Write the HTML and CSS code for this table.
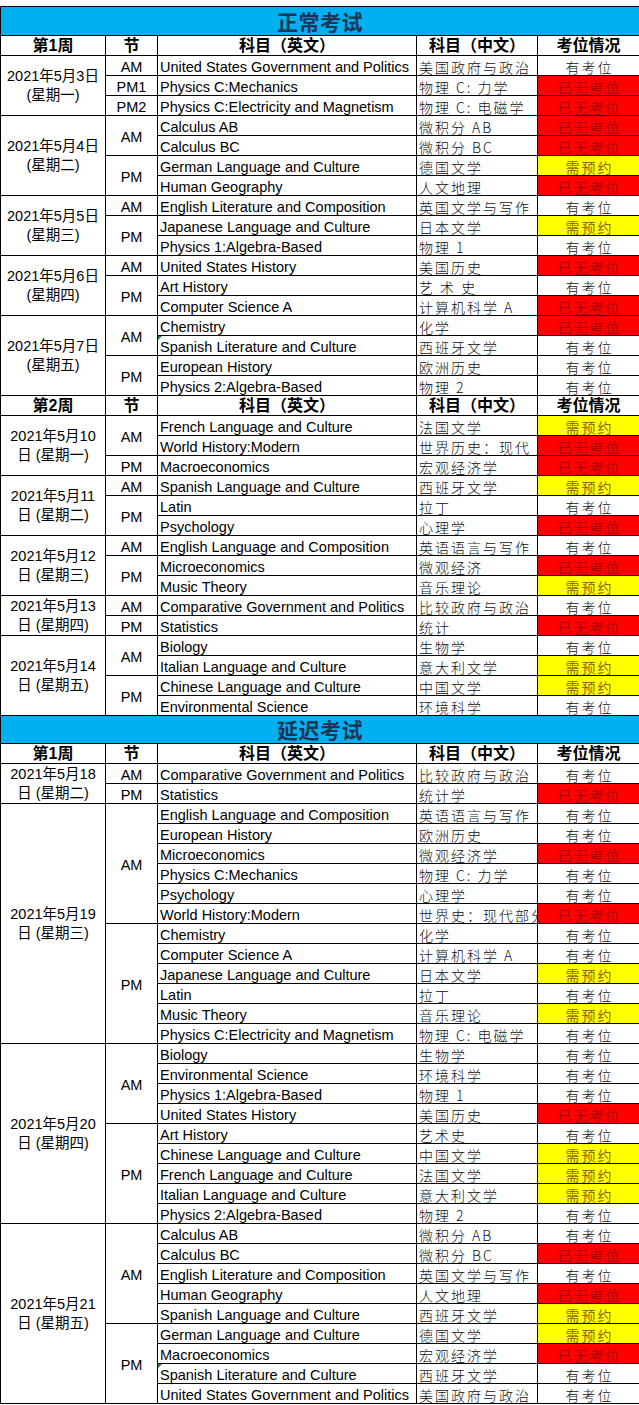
FILE: index.html
```html
<!DOCTYPE html>
<html lang="zh-CN">
<head>
<meta charset="utf-8">
<title>AP考试考位情况</title>
<link rel="stylesheet" href="styles.css">
</head>
<body>
<table class="sheet">
<colgroup><col class="c1"><col class="c2"><col class="c3"><col class="c4"><col class="c5"></colgroup>
<tbody>
<tr class="title first"><td colspan="5">正常考试</td></tr>
<tr class="hd"><td>第1周</td><td>节</td><td>科目（英文）</td><td>科目（中文）</td><td>考位情况</td></tr>

<tr><td class="date" rowspan="3">2021年5月3日<br>(星期一)</td><td class="sess">AM</td><td class="en">United States Government and Politics</td><td class="cn">美国政府与政治</td><td class="st ok">有考位</td></tr>
<tr><td class="sess">PM1</td><td class="en">Physics C:Mechanics</td><td class="cn">物理 C: 力学</td><td class="st full">已无考位</td></tr>
<tr><td class="sess">PM2</td><td class="en">Physics C:Electricity and Magnetism</td><td class="cn">物理 C: 电磁学</td><td class="st full">已无考位</td></tr>

<tr><td class="date" rowspan="4">2021年5月4日<br>(星期二)</td><td class="sess" rowspan="2">AM</td><td class="en">Calculus AB</td><td class="cn">微积分 AB</td><td class="st full">已无考位</td></tr>
<tr><td class="en">Calculus BC</td><td class="cn">微积分 BC</td><td class="st full">已无考位</td></tr>
<tr><td class="sess" rowspan="2">PM</td><td class="en">German Language and Culture</td><td class="cn">德国文学</td><td class="st book">需预约</td></tr>
<tr><td class="en">Human Geography</td><td class="cn">人文地理</td><td class="st full">已无考位</td></tr>

<tr><td class="date" rowspan="3">2021年5月5日<br>(星期三)</td><td class="sess">AM</td><td class="en">English Literature and Composition</td><td class="cn">英国文学与写作</td><td class="st ok">有考位</td></tr>
<tr><td class="sess" rowspan="2">PM</td><td class="en">Japanese Language and Culture</td><td class="cn">日本文学</td><td class="st book">需预约</td></tr>
<tr><td class="en">Physics 1:Algebra-Based</td><td class="cn">物理 1</td><td class="st ok">有考位</td></tr>

<tr><td class="date" rowspan="3">2021年5月6日<br>(星期四)</td><td class="sess">AM</td><td class="en">United States History</td><td class="cn">美国历史</td><td class="st full">已无考位</td></tr>
<tr><td class="sess" rowspan="2">PM</td><td class="en">Art History</td><td class="cn">艺 术 史</td><td class="st ok">有考位</td></tr>
<tr><td class="en">Computer Science A</td><td class="cn">计算机科学 A</td><td class="st full">已无考位</td></tr>

<tr><td class="date" rowspan="4">2021年5月7日<br>(星期五)</td><td class="sess" rowspan="2">AM</td><td class="en">Chemistry</td><td class="cn">化学</td><td class="st full">已无考位</td></tr>
<tr><td class="en mark">Spanish Literature and Culture</td><td class="cn">西班牙文学</td><td class="st ok">有考位</td></tr>
<tr><td class="sess" rowspan="2">PM</td><td class="en">European History</td><td class="cn">欧洲历史</td><td class="st ok">有考位</td></tr>
<tr><td class="en">Physics 2:Algebra-Based</td><td class="cn">物理 2</td><td class="st ok">有考位</td></tr>

<tr class="hd"><td>第2周</td><td>节</td><td>科目（英文）</td><td>科目（中文）</td><td>考位情况</td></tr>

<tr><td class="date" rowspan="3">2021年5月10<br>日 (星期一)</td><td class="sess" rowspan="2">AM</td><td class="en">French Language and Culture</td><td class="cn">法国文学</td><td class="st book">需预约</td></tr>
<tr><td class="en">World History:Modern</td><td class="cn">世界历史：现代</td><td class="st full">已无考位</td></tr>
<tr><td class="sess">PM</td><td class="en">Macroeconomics</td><td class="cn">宏观经济学</td><td class="st full">已无考位</td></tr>

<tr><td class="date" rowspan="3">2021年5月11<br>日 (星期二)</td><td class="sess">AM</td><td class="en">Spanish Language and Culture</td><td class="cn">西班牙文学</td><td class="st book">需预约</td></tr>
<tr><td class="sess" rowspan="2">PM</td><td class="en">Latin</td><td class="cn">拉丁</td><td class="st ok">有考位</td></tr>
<tr><td class="en">Psychology</td><td class="cn">心理学</td><td class="st full">已无考位</td></tr>

<tr><td class="date" rowspan="3">2021年5月12<br>日 (星期三)</td><td class="sess">AM</td><td class="en">English Language and Composition</td><td class="cn">英语语言与写作</td><td class="st ok">有考位</td></tr>
<tr><td class="sess" rowspan="2">PM</td><td class="en">Microeconomics</td><td class="cn">微观经济</td><td class="st full">已无考位</td></tr>
<tr><td class="en">Music Theory</td><td class="cn">音乐理论</td><td class="st book">需预约</td></tr>

<tr><td class="date" rowspan="2">2021年5月13<br>日 (星期四)</td><td class="sess">AM</td><td class="en">Comparative Government and Politics</td><td class="cn">比较政府与政治</td><td class="st ok">有考位</td></tr>
<tr><td class="sess">PM</td><td class="en">Statistics</td><td class="cn">统计</td><td class="st full">已无考位</td></tr>

<tr><td class="date" rowspan="4">2021年5月14<br>日 (星期五)</td><td class="sess" rowspan="2">AM</td><td class="en">Biology</td><td class="cn">生物学</td><td class="st ok">有考位</td></tr>
<tr><td class="en">Italian Language and Culture</td><td class="cn">意大利文学</td><td class="st book">需预约</td></tr>
<tr><td class="sess" rowspan="2">PM</td><td class="en">Chinese Language and Culture</td><td class="cn">中国文学</td><td class="st book">需预约</td></tr>
<tr><td class="en">Environmental Science</td><td class="cn">环境科学</td><td class="st ok">有考位</td></tr>

<tr class="title"><td colspan="5">延迟考试</td></tr>
<tr class="hd"><td>第1周</td><td>节</td><td>科目（英文）</td><td>科目（中文）</td><td>考位情况</td></tr>

<tr><td class="date" rowspan="2">2021年5月18<br>日 (星期二)</td><td class="sess">AM</td><td class="en">Comparative Government and Politics</td><td class="cn">比较政府与政治</td><td class="st ok">有考位</td></tr>
<tr><td class="sess">PM</td><td class="en">Statistics</td><td class="cn">统计学</td><td class="st full">已无考位</td></tr>

<tr><td class="date" rowspan="12">2021年5月19<br>日 (星期三)</td><td class="sess" rowspan="6">AM</td><td class="en">English Language and Composition</td><td class="cn">英语语言与写作</td><td class="st ok">有考位</td></tr>
<tr><td class="en">European History</td><td class="cn">欧洲历史</td><td class="st ok">有考位</td></tr>
<tr><td class="en">Microeconomics</td><td class="cn">微观经济学</td><td class="st full">已无考位</td></tr>
<tr><td class="en">Physics C:Mechanics</td><td class="cn">物理 C: 力学</td><td class="st ok">有考位</td></tr>
<tr><td class="en">Psychology</td><td class="cn">心理学</td><td class="st ok">有考位</td></tr>
<tr><td class="en">World History:Modern</td><td class="cn">世界史：现代部分</td><td class="st full">已无考位</td></tr>
<tr><td class="sess" rowspan="6">PM</td><td class="en">Chemistry</td><td class="cn">化学</td><td class="st ok">有考位</td></tr>
<tr><td class="en">Computer Science A</td><td class="cn">计算机科学 A</td><td class="st ok">有考位</td></tr>
<tr><td class="en">Japanese Language and Culture</td><td class="cn">日本文学</td><td class="st book">需预约</td></tr>
<tr><td class="en">Latin</td><td class="cn">拉丁</td><td class="st ok">有考位</td></tr>
<tr><td class="en">Music Theory</td><td class="cn">音乐理论</td><td class="st book">需预约</td></tr>
<tr><td class="en">Physics C:Electricity and Magnetism</td><td class="cn">物理 C: 电磁学</td><td class="st ok">有考位</td></tr>

<tr><td class="date" rowspan="9">2021年5月20<br>日 (星期四)</td><td class="sess" rowspan="4">AM</td><td class="en">Biology</td><td class="cn">生物学</td><td class="st ok">有考位</td></tr>
<tr><td class="en">Environmental Science</td><td class="cn">环境科学</td><td class="st ok">有考位</td></tr>
<tr><td class="en">Physics 1:Algebra-Based</td><td class="cn">物理 1</td><td class="st ok">有考位</td></tr>
<tr><td class="en">United States History</td><td class="cn">美国历史</td><td class="st full">已无考位</td></tr>
<tr><td class="sess" rowspan="5">PM</td><td class="en">Art History</td><td class="cn">艺术史</td><td class="st ok">有考位</td></tr>
<tr><td class="en">Chinese Language and Culture</td><td class="cn">中国文学</td><td class="st book">需预约</td></tr>
<tr><td class="en">French Language and Culture</td><td class="cn">法国文学</td><td class="st book">需预约</td></tr>
<tr><td class="en">Italian Language and Culture</td><td class="cn">意大利文学</td><td class="st book">需预约</td></tr>
<tr><td class="en">Physics 2:Algebra-Based</td><td class="cn">物理 2</td><td class="st ok">有考位</td></tr>

<tr><td class="date" rowspan="9">2021年5月21<br>日 (星期五)</td><td class="sess" rowspan="5">AM</td><td class="en">Calculus AB</td><td class="cn">微积分 AB</td><td class="st ok">有考位</td></tr>
<tr><td class="en">Calculus BC</td><td class="cn">微积分 BC</td><td class="st full">已无考位</td></tr>
<tr><td class="en">English Literature and Composition</td><td class="cn">英国文学与写作</td><td class="st ok">有考位</td></tr>
<tr><td class="en">Human Geography</td><td class="cn">人文地理</td><td class="st full">已无考位</td></tr>
<tr><td class="en">Spanish Language and Culture</td><td class="cn">西班牙文学</td><td class="st book">需预约</td></tr>
<tr><td class="sess" rowspan="4">PM</td><td class="en">German Language and Culture</td><td class="cn">德国文学</td><td class="st book">需预约</td></tr>
<tr><td class="en">Macroeconomics</td><td class="cn">宏观经济学</td><td class="st full">已无考位</td></tr>
<tr><td class="en mark">Spanish Literature and Culture</td><td class="cn">西班牙文学</td><td class="st ok">有考位</td></tr>
<tr><td class="en">United States Government and Politics</td><td class="cn">美国政府与政治</td><td class="st ok">有考位</td></tr>
</tbody>
</table>
</body>
</html>
```

FILE: styles.css
```css
html, body {
  margin: 0;
  padding: 0;
  background: #fff;
}
body {
  padding-top: 6px;
  font-family: "Liberation Sans", "Noto Sans CJK SC", sans-serif;
  color: #000;
}
.sheet {
  width: 639px;
  table-layout: fixed;
  border-collapse: collapse;
  border-spacing: 0;
}
.c1 { width: 105px; }
.c2 { width: 52px; }
.c3 { width: 259px; }
.c4 { width: 121px; }
.c5 { width: 102px; }

.sheet td {
  border: 1px solid #000;
  padding: 3px 0 0 0;
  height: 16px;
  line-height: 16px;
  white-space: nowrap;
  overflow: hidden;
  vertical-align: middle;
  font-size: 14px;
}
.sheet .title td {
  padding: 0;
  height: 27px;
  background: #00b0f0;
  text-align: center;
  font-family: "Noto Sans CJK SC", sans-serif;
  font-weight: 700;
  font-size: 21px;
  line-height: 27px;
  color: #1c3553;
  letter-spacing: 0.5px;
}
.sheet .title.first td { height: 28px; }
.sheet .hd td {
  padding: 0;
  height: 19px;
  line-height: 19px;
  text-align: center;
  font-weight: 700;
  font-size: 16px;
  font-family: "Liberation Sans", "Noto Sans CJK SC", sans-serif;
}
.sheet .date {
  padding-top: 1px;
  height: auto;
  text-align: center;
  white-space: normal;
  font-size: 14.5px;
  line-height: 19px;
}
.sheet .sess {
  text-align: center;
  font-size: 14.5px;
}
.sheet .en {
  padding-left: 2px;
  font-size: 14.5px;
}
.sheet .cn {
  padding-left: 2px;
  font-family: "Noto Sans CJK SC", sans-serif;
  font-weight: 300;
  font-size: 14px;
  letter-spacing: 2px;
  color: #111;
}
.sheet .st {
  text-align: center;
  font-family: "Noto Sans CJK SC", sans-serif;
  font-weight: 300;
  font-size: 14px;
  letter-spacing: 2px;
  text-indent: 2px;
}
.sheet .ok { color: #111; }
.sheet .full { background: #ff0000; color: #a80000; font-weight: 400; }
.sheet .book { background: #ffff00; color: #8a6400; font-weight: 400; }
.sheet .mark { position: relative; }
.sheet .mark::before {
  content: "";
  position: absolute;
  left: 0;
  top: 0;
  border-top: 4px solid #2c7a2c;
  border-right: 4px solid transparent;
}
```
